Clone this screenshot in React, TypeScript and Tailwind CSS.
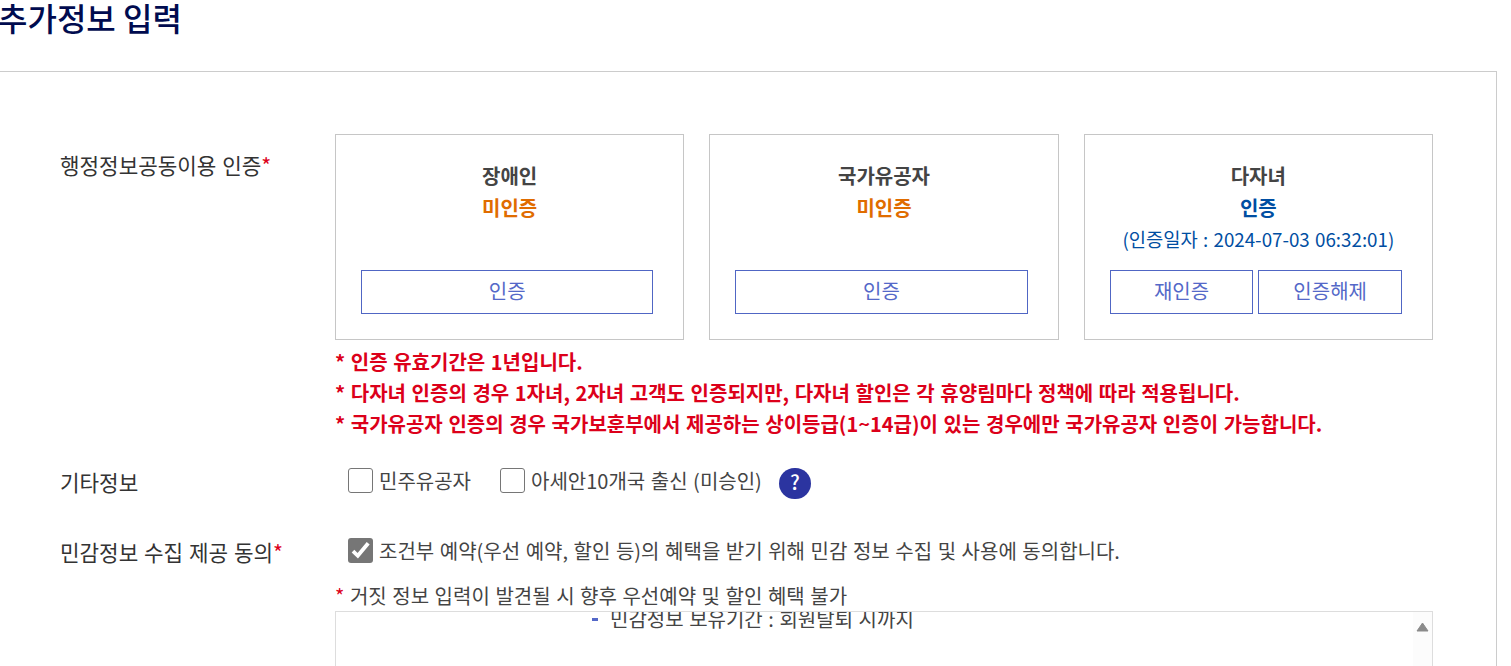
import { useState } from "react";

interface Certification {
  name: string;
  certified: boolean;
  date?: string;
  actions: string[];
}

const certifications: Certification[] = [
  { name: "장애인", certified: false, actions: ["인증"] },
  { name: "국가유공자", certified: false, actions: ["인증"] },
  { name: "다자녀", certified: true, date: "2024-07-03 06:32:01", actions: ["재인증", "인증해제"] },
];

const notices = [
  "* 인증 유효기간은 1년입니다.",
  "* 다자녀 인증의 경우 1자녀, 2자녀 고객도 인증되지만, 다자녀 할인은 각 휴양림마다 정책에 따라 적용됩니다.",
  "* 국가유공자 인증의 경우 국가보훈부에서 제공하는 상이등급(1~14급)이 있는 경우에만 국가유공자 인증이 가능합니다.",
];

function Label({ text, required }: { text: string; required?: boolean }) {
  return (
    <div className="w-[275px] shrink-0 text-[21.25px] leading-7 text-[#333]">
      {text}
      {required && <span className="text-[#dc001a]">*</span>}
    </div>
  );
}

function CertCard({ cert }: { cert: Certification }) {
  return (
    <div className="flex h-[206px] flex-1 flex-col border border-[#c6c6c6] p-[25px] text-center leading-8">
      <strong className="font-bold text-[#444]">{cert.name}</strong>
      <strong className={cert.certified ? "font-bold text-[#004ea2]" : "font-bold text-[#e06c00]"}>
        {cert.certified ? "인증" : "미인증"}
      </strong>
      {cert.date && (
        <span className="-mt-px whitespace-nowrap text-[18.75px] text-[#004ea2]">(인증일자 : {cert.date})</span>
      )}
      <div className="mt-auto mr-[5px] flex gap-[5px]">
        {cert.actions.map((action) => (
          <button key={action} className="h-11 flex-1 border border-[#5066c4] pb-0.5 text-[#5468c8]">
            {action}
          </button>
        ))}
      </div>
    </div>
  );
}

function Checkbox({ text, defaultChecked = false }: { text: string; defaultChecked?: boolean }) {
  const [checked, setChecked] = useState(defaultChecked);

  return (
    <label className="flex items-start gap-1.5 text-[#444]">
      <input type="checkbox" className="sr-only" checked={checked} onChange={() => setChecked(!checked)} />
      <span
        className={
          checked
            ? "h-[25px] w-[25px] rounded-[3px] bg-[#767676]"
            : "h-[25px] w-[25px] rounded-[3px] border border-[#767676] bg-white"
        }
      >
        {checked && (
          <svg viewBox="0 0 25 25" className="h-[25px] w-[25px]" fill="none" stroke="#fff" strokeWidth="3.8">
            <path d="M5 13.2L9.8 17.8L20.2 5.2" />
          </svg>
        )}
      </span>
      <span className="leading-[25px] whitespace-nowrap">{text}</span>
    </label>
  );
}

export default function App() {
  return (
    <div className="h-[666px] overflow-hidden bg-white font-['Noto_Sans_CJK_KR',sans-serif] text-[20px]">
      <h2 className="-ml-0.5 h-[71px] text-[32px] leading-[34px] font-medium text-[#000b4f]">추가정보 입력</h2>

      <div className="h-[700px] w-[1497px] border-t border-r border-[#ccc] pt-[62px] pr-[63px] pl-[60px] [word-spacing:1.08px]">
        <div className="flex h-[334px]">
          <div className="pt-[17px]">
            <Label text="행정정보공동이용 인증" required />
          </div>
          <div className="flex-1">
            <div className="flex gap-[25px]">
              {certifications.map((cert) => (
                <CertCard key={cert.name} cert={cert} />
              ))}
            </div>
            <div className="mt-1.5 leading-[31px] font-bold whitespace-nowrap text-[#dc001a]">
              {notices.map((notice) => (
                <p key={notice}>{notice}</p>
              ))}
            </div>
          </div>
        </div>

        <div className="flex h-[70px]">
          <Label text="기타정보" />
          <div className="flex items-start pl-[13px]">
            <Checkbox text="민주유공자" />
            <div className="ml-[29px]">
              <Checkbox text="아세안10개국 출신 (미승인)" />
            </div>
            <button className="ml-[17px] h-[31px] w-8 rounded-full bg-[#2b34a0] pb-[3px] text-[20px] leading-[28px] font-medium text-white">
              ?
            </button>
          </div>
        </div>

        <div className="flex">
          <Label text="민감정보 수집 제공 동의" required />
          <div className="flex-1">
            <div className="pl-[13px]">
              <Checkbox text="조건부 예약(우선 예약, 할인 등)의 혜택을 받기 위해 민감 정보 수집 및 사용에 동의합니다." defaultChecked />
            </div>
            <p className="mt-[17px] h-[31px] leading-[31px] text-[#444]">
              <span className="text-[#dc001a]">*</span> 거짓 정보 입력이 발견될 시 향후 우선예약 및 할인 혜택 불가
            </p>
            <div className="flex h-[120px] justify-between overflow-hidden border border-[#ddd]">
              <div className="-mt-2 ml-[256px] flex h-[30px] items-center leading-[30px] text-[#444]">
                <span className="mr-3 h-[3px] w-1.5 bg-[#5468c8]" />
                민감정보 보유기간 : 회원탈퇴 시까지
              </div>
              <div className="flex w-[19px] justify-center bg-[#fcfcfc] pt-2.5">
                <svg viewBox="0 0 13 10" className="h-2.5 w-[13px]" fill="#8b8b8b" stroke="#8b8b8b" strokeLinejoin="round">
                  <path d="M1 9L6.5 1L12 9Z" />
                </svg>
              </div>
            </div>
          </div>
        </div>
      </div>
    </div>
  );
}
